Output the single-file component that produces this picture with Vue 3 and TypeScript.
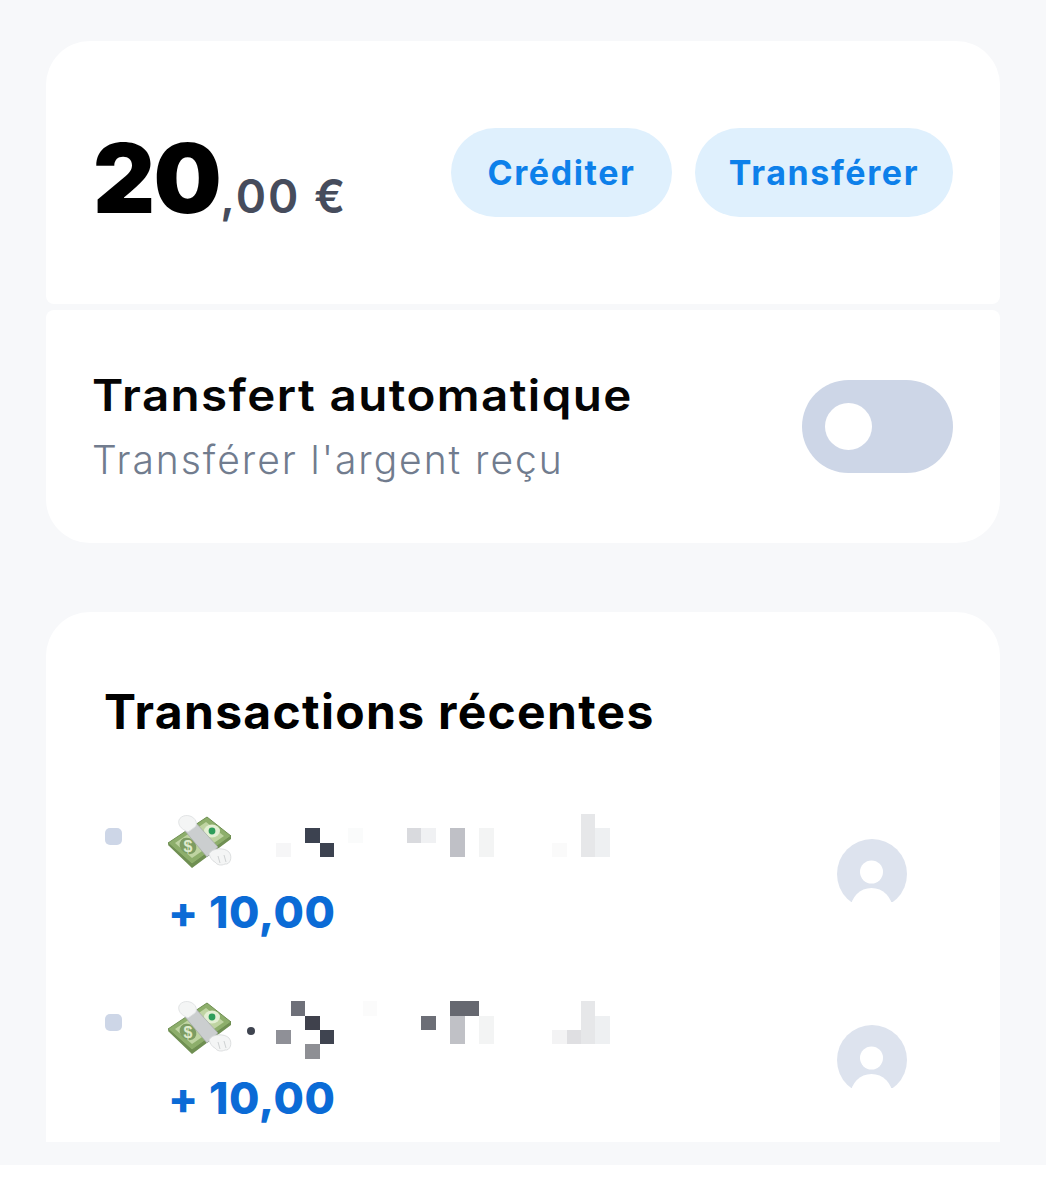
<script setup lang="ts">
  type Block = [number, number, number, number, string]

  // blurred names: x, y, w, h, colour, in the coordinates of the name strip
  const rows: { id: number; blocks: Block[]; dot: boolean }[] = [
    {
      id: 1,
      dot: false,
      blocks: [
        [61, 18, 15, 15, '#3c4250'],
        [76, 33, 14, 14, '#3c4250'],
        [32, 33, 15, 14, '#f6f6f7'],
        [104, 18, 15, 15, '#fafbfb'],
        [163, 18, 14, 15, '#d9dade'],
        [177, 18, 15, 15, '#f0f1f3'],
        [206, 18, 15, 29, '#bfc0c6'],
        [235, 18, 15, 29, '#f3f4f4'],
        [308, 33, 15, 14, '#fafafa'],
        [337, 4, 14, 43, '#e6e7e9'],
        [351, 18, 15, 29, '#eef0f2'],
      ],
    },
    {
      id: 2,
      dot: true,
      blocks: [
        [47, 5, 14, 15, '#6e7079'],
        [61, 20, 15, 14, '#3f414c'],
        [76, 34, 14, 14, '#3f4450'],
        [32, 34, 15, 14, '#8f9097'],
        [61, 48, 15, 15, '#8e8f94'],
        [119, 5, 14, 15, '#fbfbfb'],
        [177, 20, 15, 14, '#6c6e76'],
        [206, 5, 29, 15, '#666870'],
        [206, 20, 15, 28, '#c0c1c6'],
        [235, 20, 15, 28, '#f3f4f4'],
        [308, 34, 15, 14, '#f3f3f4'],
        [323, 34, 14, 14, '#dfdfe2'],
        [337, 5, 14, 43, '#e6e7e9'],
        [351, 20, 15, 28, '#eef0f2'],
      ],
    },
  ]
</script>

<template>
  <div class="page">
    <section class="card balance">
      <div class="amount">
        <span class="whole">20</span><span class="cents">,00 €</span>
      </div>
      <div class="actions">
        <button class="pill credit">Créditer</button>
        <button class="pill transfer">Transférer</button>
      </div>
    </section>

    <section class="card auto">
      <div>
        <div class="auto-title">Transfert automatique</div>
        <div class="auto-sub">Transférer l'argent reçu</div>
      </div>
      <div class="toggle"><span class="knob"></span></div>
    </section>

    <section class="card recent">
      <h2>Transactions récentes</h2>
      <div v-for="row in rows" :key="row.id" class="row">
        <span class="bullet"></span>
        <div class="main">
          <div class="line">
            <svg class="emoji" width="64" height="56" viewBox="0 0 64 56">
              <path d="M0 30 24 53 63 24 63 20 24 48 1 27Z" fill="#6f8f52" />
              <path d="M0 28 39 2 63 21 24 49Z" fill="#8dae6b" stroke="#6f8f52" stroke-width="1" />
              <path d="M7 28 38 7 56 21 24 43Z" fill="#bfd4a2" />
              <ellipse cx="20" cy="31" rx="9" ry="7.5" fill="#7d9c62" transform="rotate(40 20 31)" />
              <text x="20" y="37" class="dollar">$</text>
              <ellipse cx="44" cy="16" rx="8" ry="6.5" fill="#e3efd3" />
              <circle cx="44" cy="16" r="3.4" fill="#2f9e5a" />
              <path d="M17 16 28 8 50 32 39 42Z" fill="#cbcecf" stroke="#a3a7a8" stroke-width=".7" />
              <path d="M11 9C9 3 16-1 22 1 28 3 30 9 27 12L20 17C16 15 12 13 11 9Z" fill="#f4f5f5" stroke="#dcdedf" stroke-width=".8" />
              <path d="M41 39C44 33 56 32 61 37 65 42 62 50 57 49 53 51 49 50 47 47 44 46 42 42 41 39Z" fill="#f4f5f5" stroke="#d5d8d9" stroke-width=".8" />
              <path d="M50 41 52 48M56 40 58 47" stroke="#cfd2d3" stroke-width="1" fill="none" />
            </svg>
            <svg class="mask" width="376" height="64" viewBox="0 0 376 64">
              <circle v-if="row.dot" cx="7" cy="35" r="4" fill="#3f4450" />
              <rect
                v-for="(b, i) in row.blocks"
                :key="i"
                :x="b[0]"
                :y="b[1]"
                :width="b[2]"
                :height="b[3]"
                :fill="b[4]"
              />
            </svg>
          </div>
          <div class="credit-amount">+ 10,00</div>
        </div>
        <svg class="avatar" width="70" height="70" viewBox="0 0 70 70">
          <circle cx="35" cy="35" r="35" fill="#dde3ee" />
          <circle cx="34.5" cy="33" r="11.5" fill="#fff" />
          <circle cx="34.5" cy="70" r="21" fill="#fff" />
          <path d="M0 63H70V70H0Z" fill="#fff" />
        </svg>
      </div>
    </section>
  </div>
</template>

<style>
  html,
  body {
    background: #fff;
  }
</style>

<style scoped>
  .page {
    height: 1165px;
    box-sizing: border-box;
    padding: 41px 46px 0;
    background: #f7f8fa;
    font-family: Inter, 'Liberation Sans', sans-serif;
    overflow: hidden;
  }

  .card {
    background: #fff;
    box-sizing: border-box;
  }

  .balance {
    height: 263px;
    border-radius: 44px 44px 8px 8px;
    padding: 87px 47px 0 48px;
    display: flex;
    justify-content: space-between;
    align-items: flex-start;
  }

  .amount {
    color: #000;
    line-height: 100px;
    white-space: nowrap;
  }
  .whole {
    font-size: 96px;
    font-weight: 900;
    letter-spacing: -1.5px;
    margin-left: -1px;
  }
  .cents {
    font-size: 46px;
    font-weight: 600;
    letter-spacing: 2px;
    color: #464c5c;
  }

  .actions {
    display: flex;
    gap: 23px;
  }
  .pill {
    height: 89px;
    border: none;
    border-radius: 45px;
    background: #dff0fd;
    color: #0d80ea;
    font-family: inherit;
    font-size: 34px;
    font-weight: 700;
    letter-spacing: 1.6px;
    padding: 0;
  }
  .credit {
    width: 221px;
  }
  .transfer {
    width: 258px;
  }

  .auto {
    height: 233px;
    margin-top: 6px;
    border-radius: 8px 8px 44px 44px;
    padding: 0 47px 0 46px;
    display: flex;
    justify-content: space-between;
    align-items: center;
  }
  .auto-title {
    font-size: 44px;
    font-weight: 600;
    line-height: 64px;
    letter-spacing: 1.3px;
    margin-top: 1px;
    color: #050505;
    transform: scaleX(1.08);
    transform-origin: left;
  }
  .auto-sub {
    font-size: 39px;
    font-weight: 300;
    line-height: 64px;
    letter-spacing: 1.95px;
    margin-top: 1px;
    color: #717c8e;
  }

  .toggle {
    width: 151px;
    height: 93px;
    border-radius: 47px;
    background: #cdd6e7;
    display: flex;
    align-items: center;
    padding-left: 23px;
    box-sizing: border-box;
  }
  .knob {
    width: 47px;
    height: 47px;
    border-radius: 50%;
    background: #fff;
  }

  .recent {
    height: 530px;
    margin-top: 69px;
    border-radius: 44px 44px 0 0;
    padding: 70px 93px 0 59px;
    overflow: hidden;
  }
  h2 {
    margin: 0 0 68px -1px;
    font-size: 48px;
    font-weight: 700;
    line-height: 60px;
    letter-spacing: 1.3px;
    color: #000;
  }

  .row {
    height: 186px;
    display: flex;
    align-items: flex-start;
  }
  .bullet {
    width: 17px;
    height: 17px;
    margin-top: 18px;
    border-radius: 5px;
    background: #cdd6e7;
  }
  .main {
    margin-left: 46px;
    flex: 1;
  }
  .line {
    display: flex;
    align-items: flex-start;
    height: 64px;
  }
  .emoji {
    margin-top: 5px;
    flex: none;
  }
  .dollar {
    font-family: 'Liberation Sans', sans-serif;
    font-size: 16px;
    font-weight: 700;
    fill: #dfeacc;
    text-anchor: middle;
  }
  .mask {
    margin-left: 12px;
    flex: none;
  }
  .credit-amount {
    margin: 8px 0 0;
    font-size: 44px;
    font-weight: 800;
    line-height: 60px;
    letter-spacing: 0.6px;
    color: #0b6bd6;
  }
  .avatar {
    margin-top: 29px;
    flex: none;
  }
</style>
